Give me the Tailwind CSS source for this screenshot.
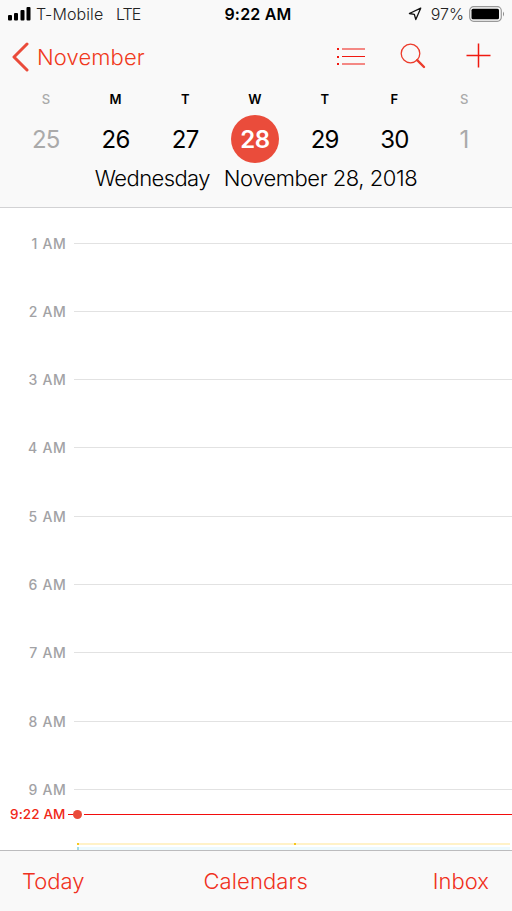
<!DOCTYPE html>
<html lang="en">
<head>
<meta charset="utf-8">
<title>Calendar</title>
<script src="https://cdn.jsdelivr.net/npm/@tailwindcss/browser@4"></script>
</head>
<body class="w-[512px] h-[911px] overflow-hidden bg-white font-['Inter',sans-serif] text-black">
<div class="flex flex-col w-full h-full whitespace-nowrap">
  <header class="h-[208px] shrink-0 bg-[#f9f9f9] border-b border-[#d2d2d4]">
    <div class="h-7 grid grid-cols-[170px_172px_170px] items-center text-[16px] leading-7">
      <div class="flex items-center pl-2">
        <svg class="w-[23px] h-[14px] mr-[5px]" viewBox="0 0 23 14"><rect x="0" y="8" width="4" height="5.500" rx="1"/><rect x="6" y="6" width="4" height="7.500" rx="1"/><rect x="12.500" y="3" width="4" height="10.500" rx="1"/><rect x="18.500" y="0" width="4" height="13.500" rx="1"/></svg>
        <span class="w-[80px] text-[#222] font-light tracking-[0.1px]">T-Mobile</span><span class="text-[#222] font-light tracking-[-1px]">LTE</span>
      </div>
      <div class="text-center font-semibold pl-[4px] tracking-[0.2px]">9:22 AM</div>
      <div class="flex items-center justify-end pr-[7px]">
        <svg class="w-[14px] h-[14px] mr-[9px]" viewBox="0 0 14 14" fill="none" stroke="#111" stroke-width="1.300" stroke-linejoin="round"><path d="M12.700 1.200 1.400 6.500 6.300 7.300 7.800 12.600Z"/></svg>
        <span class="text-[#222] font-light mr-[5px]">97%</span>
        <svg class="w-[36px] h-[16px]" viewBox="0 0 36 16"><rect x=".7" y=".7" width="31.600" height="14.600" rx="4" fill="none" stroke="#999" stroke-width="1.200"/><rect x="2.500" y="2.700" width="27.500" height="10.600" rx="1.500"/><path d="M34 5.500q2 2.500 0 5z" fill="#888"/></svg>
      </div>
    </div>
    <nav class="h-[58px] flex items-center pl-[11px] pr-[21px] text-[#f03a20]">
      <svg class="w-[18px] h-[30px] mr-[8px]" viewBox="0 0 18 30" fill="none" stroke="#ea4b3a" stroke-width="3" stroke-linecap="round" stroke-linejoin="round"><path d="M16 2 3 15 16 28"/></svg>
      <span class="text-[22px] font-light tracking-[0.1px]">November</span>
      <svg class="w-[30px] h-[20px] ml-auto mr-[34px]" viewBox="0 0 30 20" fill="#f01810"><path d="M1 1h2v2H1zM1 9h2v2H1zM1 16h2v2H1z"/><path d="M6 1.500h23v1H6zM6 9h23v1H6zM6 16.500h23v1H6z"/></svg>
      <svg class="w-[26px] h-[26px] mr-[40px] mb-[2px]" viewBox="0 0 26 26" fill="none" stroke="#ec3b2b"><circle cx="10.500" cy="10.500" r="9.300" stroke-width="1.300"/><path d="M17.200 17.200 24 24" stroke-width="2.400" stroke-linecap="round"/></svg>
      <svg class="w-[25px] h-[25px] mb-[3px]" viewBox="0 0 25 25" fill="none" stroke="#f01a10" stroke-width="1.500"><path d="M12.500 0.500V24.500M0.500 12.500H24.500"/></svg>
    </nav>
    <div class="w-[488px] ml-[11px] grid grid-cols-7 text-center text-[13px] leading-[26px] font-semibold">
      <span class="text-[#aaa] font-medium">S</span><span>M</span><span>T</span><span>W</span><span>T</span><span>F</span><span class="text-[#aaa] font-medium">S</span>
    </div>
    <div class="w-[488px] ml-[11px] mt-[3px] grid grid-cols-7 text-center text-[24px] leading-[50px] h-[48px] tracking-[-0.7px]">
      <span class="text-[#aaa]">25</span><span>26</span><span>27</span><span class="w-12 h-12 mx-auto rounded-full bg-[#ea4c3b] text-white font-semibold tracking-[-0.3px]">28</span><span>29</span><span>30</span><span class="text-[#aaa]">1</span>
    </div>
    <div class="flex justify-center gap-[14px] text-[22px] leading-[30px] font-[350]"><span class="tracking-[-0.6px]">Wednesday</span><span class="tracking-[-0.46px]">November 28, 2018</span></div>
  </header>
  <main class="relative flex-1 min-h-0 overflow-hidden pt-[0.900px] text-[14px] font-medium text-[#a2a2a5]">
    <div class="h-[68.300px] flex items-center"><span class="w-[66.500px] mr-[7.500px] text-right tracking-[0.700px]">1 AM</span><i class="flex-1 h-px bg-[#e2e2e2]"></i></div>
    <div class="h-[68.300px] flex items-center"><span class="w-[66.500px] mr-[7.500px] text-right tracking-[0.700px]">2 AM</span><i class="flex-1 h-px bg-[#e2e2e2]"></i></div>
    <div class="h-[68.300px] flex items-center"><span class="w-[66.500px] mr-[7.500px] text-right tracking-[0.700px]">3 AM</span><i class="flex-1 h-px bg-[#e2e2e2]"></i></div>
    <div class="h-[68.300px] flex items-center"><span class="w-[66.500px] mr-[7.500px] text-right tracking-[0.700px]">4 AM</span><i class="flex-1 h-px bg-[#e2e2e2]"></i></div>
    <div class="h-[68.300px] flex items-center"><span class="w-[66.500px] mr-[7.500px] text-right tracking-[0.700px]">5 AM</span><i class="flex-1 h-px bg-[#e2e2e2]"></i></div>
    <div class="h-[68.300px] flex items-center"><span class="w-[66.500px] mr-[7.500px] text-right tracking-[0.700px]">6 AM</span><i class="flex-1 h-px bg-[#e2e2e2]"></i></div>
    <div class="h-[68.300px] flex items-center"><span class="w-[66.500px] mr-[7.500px] text-right tracking-[0.700px]">7 AM</span><i class="flex-1 h-px bg-[#e2e2e2]"></i></div>
    <div class="h-[68.300px] flex items-center"><span class="w-[66.500px] mr-[7.500px] text-right tracking-[0.700px]">8 AM</span><i class="flex-1 h-px bg-[#e2e2e2]"></i></div>
    <div class="h-[68.300px] flex items-center"><span class="w-[66.500px] mr-[7.500px] text-right tracking-[0.700px]">9 AM</span><i class="flex-1 h-px bg-[#e2e2e2]"></i></div>
    <div class="absolute left-0 right-0 top-[596px] h-[21px] flex items-center text-[#f02818]">
      <span class="w-[65.500px] mr-[2.500px] text-right text-[13.500px] tracking-[0.1px]">9:22 AM</span><i class="w-[5px] h-px bg-[#f20c0c]"></i><i class="w-[9px] h-[9px] mr-px rounded-full bg-[#ea4b3a]"></i><i class="ml-px flex-1 h-px bg-[#f20c0c]"></i>
    </div>
    <div class="absolute left-[77px] right-[2px] top-[635px]">
      <div class="flex h-[2px]"><i class="w-[2px] bg-[#f7c81e]"></i><i class="w-[215px] bg-[#fff2c8]"></i><i class="w-[2px] bg-[#f7c81e]"></i><i class="flex-1 bg-[#fff2c8]"></i></div>
      <div class="flex h-[3px] mt-[2px]"><i class="w-[2px] bg-[#9fdce6]"></i><i class="flex-1 bg-[#edfafd]"></i></div>
    </div>
  </main>
  <footer class="h-[61px] shrink-0 bg-[#f9f9f9] border-t border-[#bcbcbe] flex items-center pl-[22px] pr-[23px] text-[22px] font-light text-[#f03020]"><span class="w-[181.500px]">Today</span><span class="tracking-[0.1px]">Calendars</span><span class="ml-auto">Inbox</span></footer>
</div>
</body>
</html>
